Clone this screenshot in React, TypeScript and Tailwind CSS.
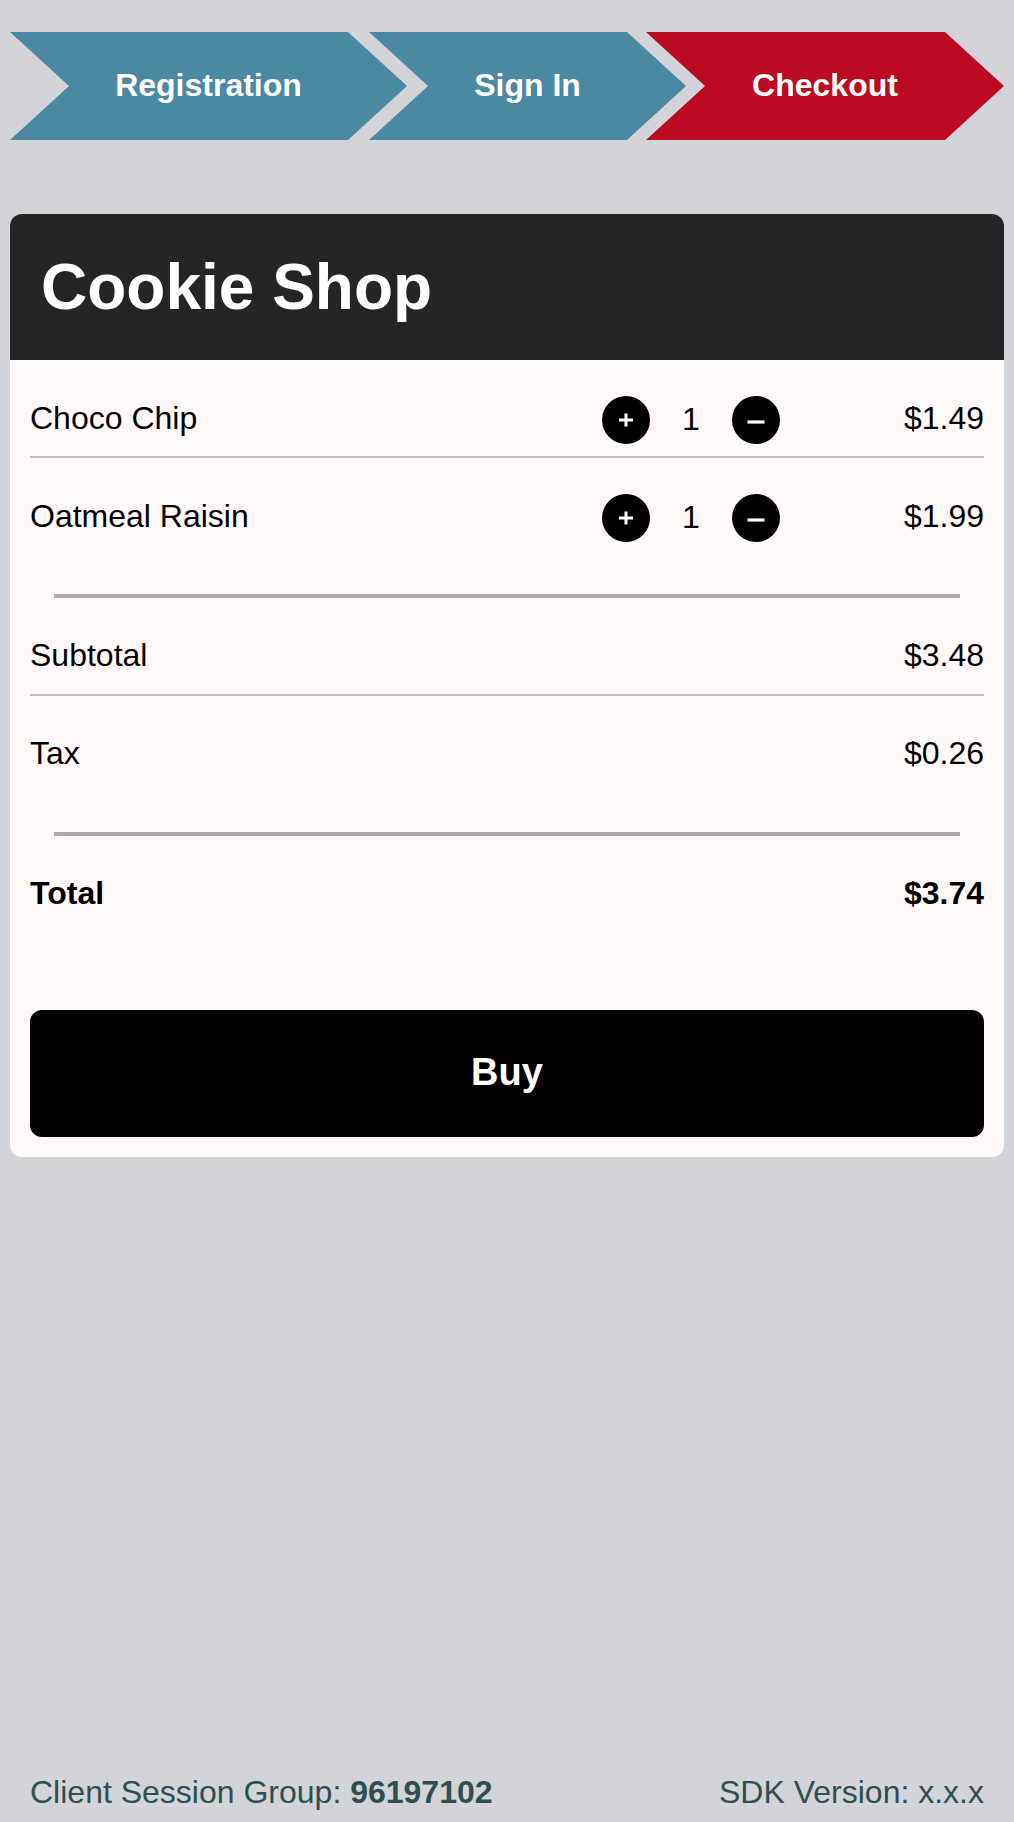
import React from "react";

const chevronClip =
  "polygon(0 0, calc(100% - 59px) 0, 100% 50%, calc(100% - 59px) 100%, 0 100%, 59px 50%)";

function Chevron({
  label,
  className,
}: {
  label: string;
  className: string;
}) {
  return (
    <div
      className={`flex h-[108px] items-center justify-center text-[32px] font-bold text-white ${className}`}
      style={{ clipPath: chevronClip }}
    >
      <span className="-mt-[3px]">{label}</span>
    </div>
  );
}

function PlusIcon() {
  return (
    <svg width="16" height="16" viewBox="0 0 16 16">
      <path d="M8 1.5v13M1 8h14" stroke="white" strokeWidth="3" />
    </svg>
  );
}

function MinusIcon() {
  return (
    <svg width="18" height="18" viewBox="0 0 18 18" className="mt-[3px]">
      <path d="M0.5 9h17" stroke="white" strokeWidth="3.2" />
    </svg>
  );
}

function ItemRow({
  name,
  qty,
  price,
  border,
}: {
  name: string;
  qty: number;
  price: string;
  border?: boolean;
}) {
  return (
    <div
      className={`pt-[36px] pb-[12px] ${border ? "border-b-2 border-[#c2c2c2]" : ""}`}
    >
      <div className="flex h-[48px] items-center">
        <div className="flex-1 -mt-[5px]">{name}</div>
        <div className="flex w-[178px] items-center">
          <button className="flex h-[48px] w-[48px] items-center justify-center rounded-full bg-black">
            <PlusIcon />
          </button>
          <div className="w-[82px] text-center -mt-[2px]">{qty}</div>
          <button className="flex h-[48px] w-[48px] items-center justify-center rounded-full bg-black">
            <MinusIcon />
          </button>
        </div>
        <div className="w-[204px] text-right -mt-[5px]">{price}</div>
      </div>
    </div>
  );
}

function SummaryRow({
  label,
  value,
  border,
  bold,
}: {
  label: string;
  value: string;
  border?: boolean;
  bold?: boolean;
}) {
  return (
    <div
      className={`pt-[36px] pb-[19px] ${border ? "border-b-2 border-[#c2c2c2]" : ""}`}
    >
      <div
        className={`flex h-[41px] items-center justify-between ${bold ? "font-bold" : ""}`}
      >
        <span>{label}</span>
        <span>{value}</span>
      </div>
    </div>
  );
}

export default function App() {
  return (
    <div className="flex min-h-screen flex-col bg-[#d3d4d9] font-['Liberation_Sans',Arial,Helvetica,sans-serif] text-black">
      {/* Steps */}
      <div className="flex pl-[10px] pt-[32px]">
        <Chevron label="Registration" className="w-[397px] bg-[#4b89a3]" />
        <Chevron label="Sign In" className="-ml-[38px] w-[317px] bg-[#4b89a3]" />
        <Chevron label="Checkout" className="-ml-[40px] w-[358px] bg-[#bc0a23]" />
      </div>

      {/* Card */}
      <div className="mx-[10px] mt-[74px] overflow-hidden rounded-[12px] bg-[#fff9fa]">
        <div className="flex h-[146px] items-center bg-[#242527] pl-[31px]">
          <h1 className="text-[64px] font-bold leading-none text-white">Cookie Shop</h1>
        </div>
        <div className="px-[20px] pb-[20px] text-[32px]">
          <ItemRow name="Choco Chip" qty={1} price="$1.49" border />
          <ItemRow name="Oatmeal Raisin" qty={1} price="$1.99" />

          <div className="mx-[24px] mt-[40px] h-[4px] bg-[#aaaaaa]" />

          <SummaryRow label="Subtotal" value="$3.48" border />
          <SummaryRow label="Tax" value="$0.26" />

          <div className="mx-[24px] mt-[40px] h-[4px] bg-[#aaaaaa]" />

          <SummaryRow label="Total" value="$3.74" bold />

          <button className="mt-[78px] flex h-[127px] w-full items-center justify-center rounded-[12px] bg-black text-[38px] font-bold text-white">
            <span className="-mt-[3px]">Buy</span>
          </button>
        </div>
      </div>

      {/* Footer */}
      <div className="mt-auto flex items-center justify-between px-[30px] pb-[11px] text-[32px] leading-[37px] text-[#2f4f4f]">
        <span>
          Client Session Group: <span className="font-bold">96197102</span>
        </span>
        <span>SDK Version: x.x.x</span>
      </div>
    </div>
  );
}
